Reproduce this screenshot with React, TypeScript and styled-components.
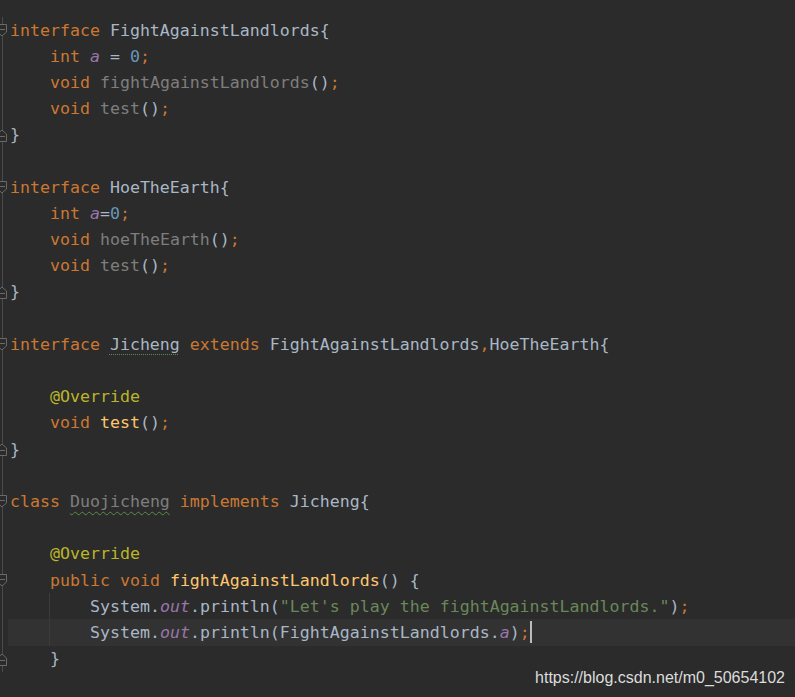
import React from "react";
import styled, { createGlobalStyle, css } from "styled-components";

const Global = createGlobalStyle`
  html, body { margin: 0; padding: 0; background: #2b2b2b; }
  body { overflow: hidden; }
`;

type Kind = "kw" | "plain" | "unused" | "field" | "num" | "decl" | "ann" | "str" | "semi";
type Tk = [Kind, string, ("dotted" | "wavy")?];

interface LineData {
  indent: number;
  tokens: Tk[];
  fold?: "start" | "end";
  current?: boolean;
  guide?: boolean;
}

const colors: Record<Kind, string> = {
  kw: "#cc7832",
  plain: "#a9b7c6",
  unused: "#7e7e7e",
  field: "#9876aa",
  num: "#6897bb",
  decl: "#ffc66d",
  ann: "#bbb529",
  str: "#6a8759",
  semi: "#cc7832",
};

const Editor = styled.div`
  position: relative;
  width: 795px;
  height: 697px;
  box-sizing: border-box;
  padding-top: 17px;
  background: #2b2b2b;
  overflow: hidden;
  display: flex;
  flex-direction: column;
`;

const Line = styled.div<{ $current?: boolean; $guide?: boolean }>`
  position: relative;
  display: flex;
  height: 26.2px;
  align-items: center;
  ${(p) =>
    p.$current &&
    css`
      background: linear-gradient(to right, transparent 8px, #323232 8px);
    `}
  ${(p) =>
    p.$guide &&
    css`
      &::after {
        content: "";
        position: absolute;
        left: 49px;
        top: 0;
        bottom: 0;
        width: 1px;
        background: #3b3b3b;
      }
    `}
`;

const Gutter = styled.div`
  position: relative;
  width: 10px;
  height: 100%;
  flex: none;
  &::before {
    content: "";
    position: absolute;
    left: 2px;
    top: 0;
    bottom: 0;
    width: 1px;
    background: #4a4a4a;
  }
`;

const FoldIcon = styled.svg`
  position: absolute;
  left: -3px;
  top: 7px;
`;

const Code = styled.div<{ $indent: number }>`
  padding-left: ${(p) => p.$indent * 40}px;
  font-family: "DejaVu Sans Mono", "Liberation Mono", monospace;
  font-size: 16.6px;
  white-space: pre;
  color: #a9b7c6;
  display: flex;
  align-items: center;
`;

const Tok = styled.span<{ $kind: Kind; $under?: "dotted" | "wavy" }>`
  color: ${(p) => colors[p.$kind]};
  font-style: ${(p) => (p.$kind === "field" ? "italic" : "normal")};
  ${(p) =>
    p.$under &&
    css`
      text-decoration-line: underline;
      text-decoration-style: ${p.$under};
      text-decoration-color: #5d8a4a;
      text-underline-offset: 4px;
      text-decoration-thickness: 1px;
    `}
`;

const Caret = styled.span`
  display: inline-block;
  width: 2px;
  height: 22px;
  background: #bbbbbb;
`;

const Watermark = styled.div`
  position: absolute;
  right: 10px;
  bottom: 10px;
  font-family: "Liberation Sans", Arial, sans-serif;
  font-size: 16px;
  line-height: 18px;
  color: #dcdcdc;
`;

const Fold: React.FC<{ kind: "start" | "end" }> = ({ kind }) => (
  <FoldIcon width="11" height="13" viewBox="0 0 11 13">
    {kind === "start" ? (
      <path d="M0.5 0.5 H9.5 V8 L5 12 L0.5 8 Z" fill="#2b2b2b" stroke="#6a6a6a" />
    ) : (
      <path d="M0.5 12.5 H9.5 V5 L5 1 L0.5 5 Z" fill="#2b2b2b" stroke="#6a6a6a" />
    )}
    <path d={kind === "start" ? "M3 5.5 H8" : "M3 7.5 H8"} stroke="#6a6a6a" />
  </FoldIcon>
);

const lines: LineData[] = [
  { indent: 0, fold: "start", tokens: [["kw", "interface "], ["plain", "FightAgainstLandlords{"]] },
  { indent: 1, tokens: [["kw", "int "], ["field", "a"], ["plain", " = "], ["num", "0"], ["semi", ";"]] },
  { indent: 1, tokens: [["kw", "void "], ["unused", "fightAgainstLandlords"], ["plain", "()"], ["semi", ";"]] },
  { indent: 1, tokens: [["kw", "void "], ["unused", "test"], ["plain", "()"], ["semi", ";"]] },
  { indent: 0, fold: "end", tokens: [["plain", "}"]] },
  { indent: 0, tokens: [] },
  { indent: 0, fold: "start", tokens: [["kw", "interface "], ["plain", "HoeTheEarth{"]] },
  { indent: 1, tokens: [["kw", "int "], ["field", "a"], ["plain", "="], ["num", "0"], ["semi", ";"]] },
  { indent: 1, tokens: [["kw", "void "], ["unused", "hoeTheEarth"], ["plain", "()"], ["semi", ";"]] },
  { indent: 1, tokens: [["kw", "void "], ["unused", "test"], ["plain", "()"], ["semi", ";"]] },
  { indent: 0, fold: "end", tokens: [["plain", "}"]] },
  { indent: 0, tokens: [] },
  {
    indent: 0,
    fold: "start",
    tokens: [
      ["kw", "interface "],
      ["plain", "Jicheng", "dotted"],
      ["kw", " extends "],
      ["plain", "FightAgainstLandlords"],
      ["semi", ","],
      ["plain", "HoeTheEarth{"],
    ],
  },
  { indent: 0, tokens: [] },
  { indent: 1, tokens: [["ann", "@Override"]] },
  { indent: 1, tokens: [["kw", "void "], ["decl", "test"], ["plain", "()"], ["semi", ";"]] },
  { indent: 0, fold: "end", tokens: [["plain", "}"]] },
  { indent: 0, tokens: [] },
  {
    indent: 0,
    fold: "start",
    tokens: [["kw", "class "], ["unused", "Duojicheng", "wavy"], ["kw", " implements "], ["plain", "Jicheng{"]],
  },
  { indent: 0, tokens: [] },
  { indent: 1, tokens: [["ann", "@Override"]] },
  {
    indent: 1,
    fold: "start",
    tokens: [["kw", "public void "], ["decl", "fightAgainstLandlords"], ["plain", "() {"]],
  },
  {
    indent: 2,
    guide: true,
    tokens: [
      ["plain", "System."],
      ["field", "out"],
      ["plain", ".println("],
      ["str", "\"Let's play the fightAgainstLandlords.\""],
      ["plain", ")"],
      ["semi", ";"],
    ],
  },
  {
    indent: 2,
    guide: true,
    current: true,
    tokens: [
      ["plain", "System."],
      ["field", "out"],
      ["plain", ".println(FightAgainstLandlords."],
      ["field", "a"],
      ["plain", ")"],
      ["semi", ";"],
    ],
  },
  { indent: 1, fold: "end", tokens: [["plain", "}"]] },
];

export default function App() {
  return (
    <>
      <Global />
      <Editor>
        {lines.map((l, i) => (
          <Line key={i} $current={l.current} $guide={l.guide}>
            <Gutter>{l.fold && <Fold kind={l.fold} />}</Gutter>
            <Code $indent={l.indent}>
              {l.tokens.map(([k, t, u], j) => (
                <Tok key={j} $kind={k} $under={u}>
                  {t}
                </Tok>
              ))}
              {l.current && <Caret />}
            </Code>
          </Line>
        ))}
        <Watermark>https://blog.csdn.net/m0_50654102</Watermark>
      </Editor>
    </>
  );
}
